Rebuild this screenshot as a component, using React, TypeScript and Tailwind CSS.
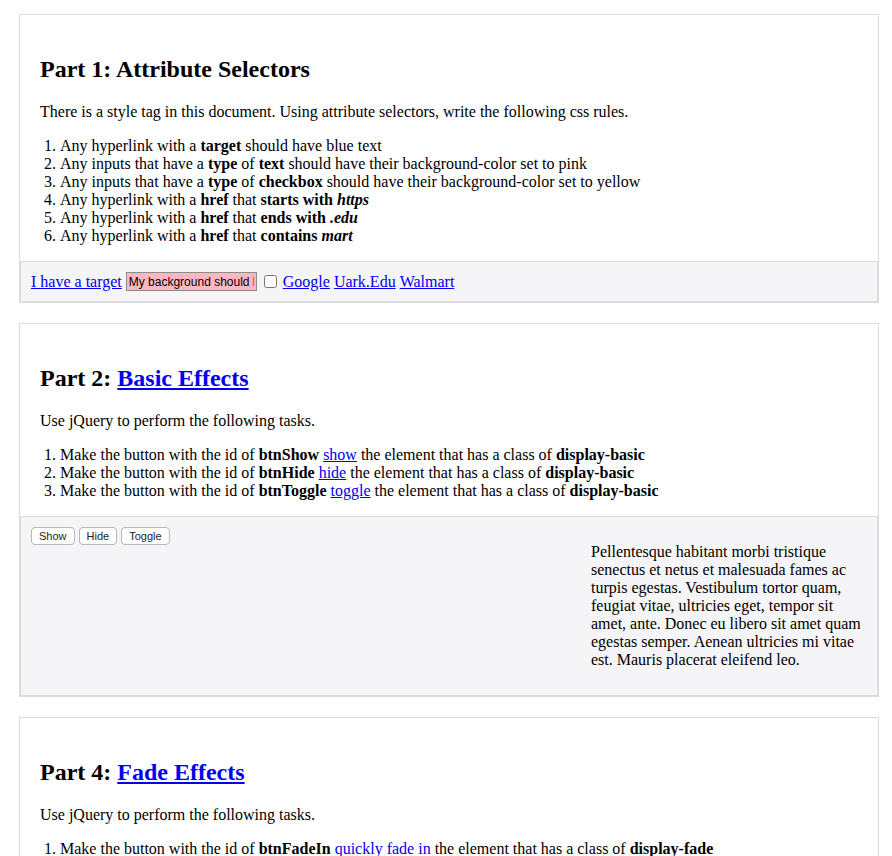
import type { ReactNode } from 'react';

const linkCls = 'text-[#0000ee] underline';

function Card({ title, children, footer }: { title: ReactNode; children: ReactNode; footer: ReactNode }) {
  return (
    <div className="ml-[19px] mb-[20px] w-[860px] border border-[#dcdcdc] bg-white">
      <div className="px-[20px] pt-[20px]">
        <h2 className="mt-[20px] mb-[20px] text-[24px] leading-[28px] font-bold">{title}</h2>
        {children}
      </div>
      {footer}
    </div>
  );
}

function Intro({ text }: { text: string }) {
  return <p className="mb-[16px] leading-[18px]">{text}</p>;
}

function Steps({ children }: { children: ReactNode }) {
  return <ol className="mb-[16px] list-decimal pl-[20px] leading-[18px]">{children}</ol>;
}

function Btn({ label }: { label: string }) {
  return (
    <button className="h-[18px] rounded-[4px] border border-[#b8b8b8] bg-white px-[7px] font-['Liberation_Sans',Arial,sans-serif] text-[11px] leading-[16px] text-[#222]">
      {label}
    </button>
  );
}

const lorem =
  'Pellentesque habitant morbi tristique senectus et netus et malesuada fames ac turpis egestas. Vestibulum tortor quam, feugiat vitae, ultricies eget, tempor sit amet, ante. Donec eu libero sit amet quam egestas semper. Aenean ultricies mi vitae est. Mauris placerat eleifend leo.';

export default function App() {
  return (
    <div className="min-h-[856px] bg-white pt-[14px] font-['Liberation_Serif','Times_New_Roman',serif] text-[16px] text-black">
      <Card
        title="Part 1: Attribute Selectors"
        footer={
          <div className="border border-[#dcdcdc] bg-[#f5f5f7] p-[10px]">
            <div className="flex h-[19px] items-center">
              <a className={linkCls}>I have a target</a>
              <input
                readOnly
                value="My background should be pink"
                className="ml-[4px] h-[19px] w-[131px] border border-[#8c8c8c] bg-[#ffb6c1] px-[2px] font-['Liberation_Sans',Arial,sans-serif] text-[12px] text-black outline-none"
              />
              <input type="checkbox" className="m-0 ml-[7px] h-[13px] w-[13px]" />
              <a className={`${linkCls} ml-[6px]`}>Google</a>
              <a className={`${linkCls} ml-[4px]`}>Uark.Edu</a>
              <a className={`${linkCls} ml-[4px]`}>Walmart</a>
            </div>
          </div>
        }
      >
        <Intro text="There is a style tag in this document. Using attribute selectors, write the following css rules." />
        <Steps>
          <li>Any hyperlink with a <b>target</b> should have blue text</li>
          <li>Any inputs that have a <b>type</b> of <b>text</b> should have their background-color set to pink</li>
          <li>Any inputs that have a <b>type</b> of <b>checkbox</b> should have their background-color set to yellow</li>
          <li>Any hyperlink with a <b>href</b> that <b>starts with <i>https</i></b></li>
          <li>Any hyperlink with a <b>href</b> that <b>ends with <i>.edu</i></b></li>
          <li>Any hyperlink with a <b>href</b> that <b>contains <i>mart</i></b></li>
        </Steps>
      </Card>

      <Card
        title={<>Part 2: <a className={linkCls}>Basic Effects</a></>}
        footer={
          <div className="flex items-start justify-between border border-[#dcdcdc] bg-[#f5f5f7] p-[10px]">
            <div className="flex gap-[4px]">
              <Btn label="Show" />
              <Btn label="Hide" />
              <Btn label="Toggle" />
            </div>
            <p className="my-[16px] w-[276px] leading-[18px]">{lorem}</p>
          </div>
        }
      >
        <Intro text="Use jQuery to perform the following tasks." />
        <Steps>
          <li>Make the button with the id of <b>btnShow</b> <a className={linkCls}>show</a> the element that has a class of <b>display-basic</b></li>
          <li>Make the button with the id of <b>btnHide</b> <a className={linkCls}>hide</a> the element that has a class of <b>display-basic</b></li>
          <li>Make the button with the id of <b>btnToggle</b> <a className={linkCls}>toggle</a> the element that has a class of <b>display-basic</b></li>
        </Steps>
      </Card>

      <Card
        title={<>Part 4: <a className={linkCls}>Fade Effects</a></>}
        footer={<div className="h-[120px] border border-[#dcdcdc] bg-[#f5f5f7]" />}
      >
        <Intro text="Use jQuery to perform the following tasks." />
        <Steps>
          <li>Make the button with the id of <b>btnFadeIn</b> <span className="text-[#0000ee]">quickly fade in</span> the element that has a class of <b>display-fade</b></li>
          <li>Make the button with the id of <b>btnFadeOut</b> <span className="text-[#0000ee]">slowly fade out</span> the element that has a class of <b>display-fade</b></li>
          <li>Make the button with the id of <b>btnFadeToggle</b> <span className="text-[#0000ee]">fade toggle</span> the element that has a class of <b>display-fade</b></li>
        </Steps>
      </Card>
    </div>
  );
}
